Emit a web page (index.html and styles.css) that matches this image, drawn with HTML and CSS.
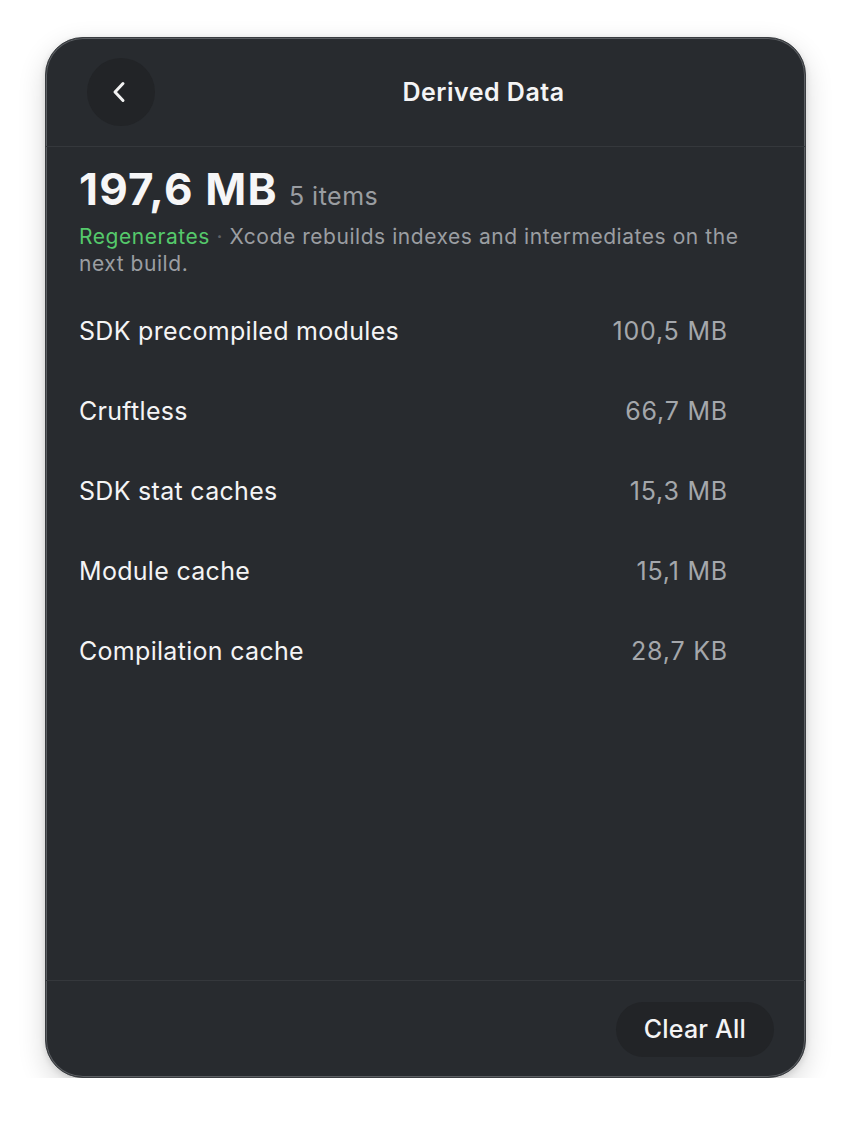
FILE: index.html
```html
<!DOCTYPE html>
<html lang="en">
<head>
<meta charset="utf-8">
<title>Derived Data</title>
<link rel="stylesheet" href="styles.css">
</head>
<body>
<div class="panel">
  <header class="header">
    <button class="back" aria-label="Back">
      <svg class="chev" width="14" height="22" viewBox="0 0 14 22"><path d="M11 2.5 L3 11 L11 19.5" fill="none" stroke="#f2f2f2" stroke-width="3" stroke-linecap="round" stroke-linejoin="round"/></svg>
    </button>
    <h1 class="title">Derived Data</h1>
  </header>
  <main class="content">
    <div class="summary"><span class="total">197,6 MB</span><span class="count">5 items</span></div>
    <p class="desc"><span class="regen">Regenerates</span> <span class="dot">·</span> Xcode rebuilds indexes and intermediates on the next build.</p>
    <ul class="list">
      <li class="row"><span class="name">SDK precompiled modules</span><span class="size">100,5 MB</span></li>
      <li class="row"><span class="name">Cruftless</span><span class="size">66,7 MB</span></li>
      <li class="row"><span class="name">SDK stat caches</span><span class="size">15,3 MB</span></li>
      <li class="row"><span class="name">Module cache</span><span class="size">15,1 MB</span></li>
      <li class="row"><span class="name">Compilation cache</span><span class="size">28,7 KB</span></li>
    </ul>
  </main>
  <footer class="footer">
    <button class="clear">Clear All</button>
  </footer>
</div>
</body>
</html>
```
FILE: styles.css
```css
* { box-sizing: border-box; }
html, body { margin: 0; padding: 0; background: #ffffff; }
body {
  padding: 37px 46px 0 45px;
  font-family: Inter, "Noto Sans", "Liberation Sans", sans-serif;
}
.panel {
  width: 761px;
  height: 1041px;
  background: #282b2f;
  border: 1px solid #3a3d41;
  border-radius: 38px;
  box-shadow: inset 0 0 0 1px #5c5f63, 0 10px 28px rgba(0,0,0,0.16), 0 2px 6px rgba(0,0,0,0.12);
  display: flex;
  flex-direction: column;
  overflow: hidden;
}
.header {
  height: 109px;
  flex: none;
  display: flex;
  align-items: center;
  padding-left: 41px;
  border-bottom: 1px solid #35383c;
}
.back {
  width: 68px;
  height: 68px;
  border-radius: 50%;
  border: none;
  background: #222427;
  display: flex;
  align-items: center;
  justify-content: center;
  padding: 0;
  flex: none;
}
.chev { margin-right: 5px; }
.title {
  flex: 1;
  margin: 0;
  text-align: center;
  font-size: 25px;
  font-weight: 600;
  color: #f4f4f5;
  padding-left: 7px;
  letter-spacing: 0.5px;
}
.content {
  flex: 1;
  padding: 18px 33px 0 33px;
}
.summary {
  font-size: 44px;
  line-height: 48px;
  height: 48px;
}
.total {
  font-weight: 700;
  color: #f6f6f7;
  letter-spacing: 1.2px;
}
.count {
  margin-left: 11px;
  font-size: 25px;
  letter-spacing: 0.5px;
  color: #9a9da1;
}
.desc {
  margin: 10px 0 0 0;
  font-size: 21px;
  line-height: 27px;
  letter-spacing: 0.55px;
  color: #9b9ea2;
}
.regen { color: #55c96b; }
.dot { color: #5f6266; }
.list {
  list-style: none;
  margin: 14px 0 0 0;
  padding: 0 44px 0 0;
}
.row {
  display: flex;
  justify-content: space-between;
  align-items: center;
  height: 80px;
  font-size: 25px;
  letter-spacing: 0.3px;
}
.name { color: #f4f4f5; }
.size { color: #a4a7ab; letter-spacing: 0.8px; }
.footer {
  flex: none;
  height: 97px;
  border-top: 1px solid #35383c;
  display: flex;
  justify-content: flex-end;
  align-items: center;
  padding-right: 31px;
}
.clear {
  height: 55px;
  padding: 0 28px;
  border: none;
  border-radius: 28px;
  background: #222427;
  color: #f4f4f5;
  font-family: inherit;
  font-size: 25px;
  font-weight: 500;
  letter-spacing: 0.2px;
}
```
